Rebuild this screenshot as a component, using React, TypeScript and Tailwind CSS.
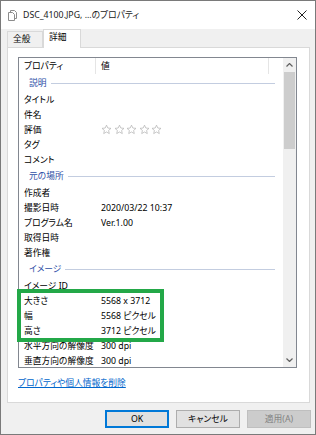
import React from "react";

type Row = {
  label: string;
  value?: string;
  group?: boolean;
  stars?: boolean;
};

const rows: Row[] = [
  { label: "説明", group: true },
  { label: "タイトル" },
  { label: "件名" },
  { label: "評価", stars: true },
  { label: "タグ" },
  { label: "コメント" },
  { label: "元の場所", group: true },
  { label: "作成者" },
  { label: "撮影日時", value: "2020/03/22 10:37" },
  { label: "プログラム名", value: "Ver.1.00" },
  { label: "取得日時" },
  { label: "著作権" },
  { label: "イメージ", group: true },
  { label: "イメージ ID" },
  { label: "大きさ", value: "5568 x 3712" },
  { label: "幅", value: "5568 ピクセル" },
  { label: "高さ", value: "3712 ピクセル" },
  { label: "水平方向の解像度", value: "300 dpi" },
  { label: "垂直方向の解像度", value: "300 dpi" },
];

function Star() {
  return (
    <svg width="11" height="11" viewBox="0 0 24 24" fill="none">
      <path
        d="M12 2.5l2.9 6.3 6.9.7-5.2 4.6 1.5 6.8L12 17.4l-6.1 3.5 1.5-6.8-5.2-4.6 6.9-.7z"
        stroke="#b4b4b4"
        strokeWidth="1.6"
        strokeLinejoin="round"
      />
    </svg>
  );
}

function FileIcon() {
  return (
    <svg width="9" height="11" viewBox="0 0 9 11" fill="none">
      <path d="M2.5 0.5h4l2 2v6h-6z" fill="#fff" stroke="#8c8c8c" />
      <path d="M0.5 2.5h4l2 2v6h-6z" fill="#fff" stroke="#8c8c8c" />
    </svg>
  );
}

export default function App() {
  return (
    <div className="relative flex h-[435px] w-[316px] flex-col border border-[#7a7a7a] bg-[#f0f0f0] text-[8.75px] leading-[12px] text-black [font-family:'Noto_Sans','Noto_Sans_CJK_JP',sans-serif] [font-feature-settings:'palt']">
      {/* title bar */}
      <div className="flex h-[28px] shrink-0 items-center bg-white pl-[7px] pr-[8px]">
        <FileIcon />
        <span className="ml-[6px] flex-1 text-[#1a1a1a]">DSC_4100.JPG, ...のプロパティ</span>
        <svg width="10" height="10" viewBox="0 0 10 10">
          <path d="M0.5 0.5l9 9M9.5 0.5l-9 9" stroke="#222" strokeWidth="1" />
        </svg>
      </div>

      {/* tabs */}
      <div className="relative z-10 -mb-px flex h-[19px] items-end pl-[6px]">
        <div className="mb-[1px] h-[16px] w-[36px] border border-b-0 border-[#d9d9d9] bg-[#f0f0f0] pl-[5px] pt-[1px]">
          全般
        </div>
        <div className="h-[19px] w-[38px] border border-b-0 border-[#d9d9d9] bg-white pl-[5px] pt-[1px]">
          詳細
        </div>
      </div>

      {/* panel */}
      <div className="ml-[6px] flex h-[356px] w-[303px] flex-col border border-[#d9d9d9] bg-white pl-[10px] pt-[9px]">
        <div className="flex h-[311px] w-[279px] border border-[#828790]">
          <div className="flex min-w-0 flex-1 flex-col overflow-hidden">
            <div className="flex h-[16px] shrink-0 items-center">
              <div className="flex h-full w-[77px] items-center border-r border-[#e5e5e5] pl-[5px]">
                プロパティ
              </div>
              <div className="flex h-full w-[173px] items-center border-r border-[#e5e5e5] pl-[5px]">
                値
              </div>
            </div>
            {rows.map((r) =>
              r.group ? (
                <div key={r.label} className="flex h-[18px] shrink-0 items-center pl-[10px] pr-[8px]">
                  <span className="text-[#2d4ea6]">{r.label}</span>
                  <div className="ml-[4px] h-px flex-1 bg-[#c3cde0]" />
                </div>
              ) : (
                <div key={r.label} className="flex h-[15px] shrink-0 items-center">
                  <div className="w-[82px] shrink-0 pl-[5px] whitespace-nowrap">{r.label}</div>
                  {r.stars ? (
                    <div className="flex gap-[1.5px]">
                      <Star />
                      <Star />
                      <Star />
                      <Star />
                      <Star />
                    </div>
                  ) : (
                    <div className="whitespace-nowrap">{r.value}</div>
                  )}
                </div>
              )
            )}
          </div>

          {/* scrollbar */}
          <div className="flex w-[13px] shrink-0 flex-col bg-[#f0f0f0]">
            <div className="flex h-[14px] items-center justify-center">
              <svg width="7" height="4" viewBox="0 0 7 4">
                <path d="M0.5 3.5l3-3 3 3" stroke="#606060" fill="none" strokeWidth="1.2" />
              </svg>
            </div>
            <div className="mx-[1px] h-[77px] bg-[#cdcdcd]" />
            <div className="flex-1" />
            <div className="flex h-[14px] items-center justify-center">
              <svg width="7" height="4" viewBox="0 0 7 4">
                <path d="M0.5 0.5l3 3 3-3" stroke="#606060" fill="none" strokeWidth="1.2" />
              </svg>
            </div>
          </div>
        </div>

        <a className="mt-[9px] w-fit text-[#0066cc] underline" href="#">
          プロパティや個人情報を削除
        </a>
      </div>

      {/* buttons */}
      <div className="mt-[7px] flex justify-end gap-[7px] pr-[4px]">
        <button className="h-[18px] w-[64px] border-2 border-[#0078d7] bg-[#e1e1e1]">OK</button>
        <button className="h-[18px] w-[64px] border border-[#adadad] bg-[#e1e1e1]">キャンセル</button>
        <button className="h-[18px] w-[64px] border border-[#bfbfbf] bg-[#cccccc] text-[#838383]">適用(A)</button>
      </div>

      {/* highlight annotation */}
      <div className="pointer-events-none absolute left-[16px] top-[288px] h-[53px] w-[147px] border-[4px] border-[#23a848]" />
    </div>
  );
}
